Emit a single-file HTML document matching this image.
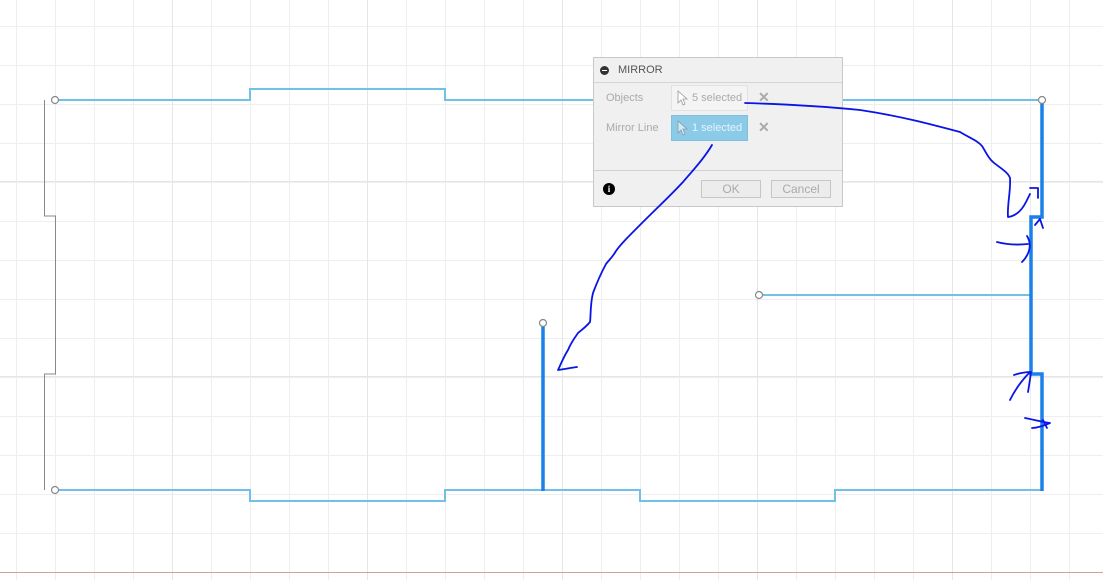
<!DOCTYPE html>
<html><head><meta charset="utf-8"><style>
body{margin:0;width:1103px;height:580px;overflow:hidden;background:#fff;font-family:"Liberation Sans",sans-serif}
.dlg{position:absolute;left:593px;top:57px;width:250px;height:150px;background:#f0f0f0;border:1px solid #c8c8c8;box-sizing:border-box;font-size:11px;color:#aaa}
.hd{height:24px;border-bottom:1px solid #d4d4d4;color:#555;font-size:11px;line-height:24px;padding-left:24px;position:relative}
.hd:before{content:"";position:absolute;left:6px;top:8px;width:9px;height:9px;border-radius:50%;background:#333}
.hd:after{content:"";position:absolute;left:8px;top:12px;width:5px;height:1px;background:#fff}
.lbl{position:absolute;left:12px}
.fld{position:absolute;left:77px;width:77px;height:26px;box-sizing:border-box;line-height:24px;padding-left:20px;border:1px solid #e2e2e2;background:#f4f4f4;color:#aaa}
.fld.sel{background:#8ccbe8;border-color:#7fc0e0;color:#e4f3fa}
.x{position:absolute;left:164px;font-size:14px;color:#aaa;font-weight:bold}
.ft{position:absolute;left:0;right:0;top:112px;border-top:1px solid #d0d0d0}
.btn{position:absolute;top:122px;height:18px;box-sizing:border-box;border:1px solid #c6c6c6;background:#ececec;color:#aaa;text-align:center;line-height:16px;font-size:12px}
</style></head><body>
<svg width="1103" height="580" style="position:absolute;left:0;top:0">
<defs><pattern id="g" x="16" y="26" width="39" height="39" patternUnits="userSpaceOnUse"><path d="M0.5 0V39M0 0.5H39" stroke="#eeeeee" stroke-width="1"/></pattern></defs>
<rect width="1103" height="580" fill="url(#g)"/>
<g stroke="#e6e6e6"><path d="M172.5 0V580M367.5 0V580M562.5 0V580M757.5 0V580M952.5 0V580M0 181.5H1103M0 376.5H1103"/></g>
<line x1="0" y1="572.5" x2="1103" y2="572.5" stroke="#c9a590" stroke-width="1"/>
<path d="M44.5 100V216H55.5V374H44.5V490" fill="none" stroke="#888" stroke-width="1"/>
<g fill="none" stroke="#70c0ea" stroke-width="2">
<path d="M55 100H250V89H445V100H1042"/>
<path d="M55 490H250V501H445V490H640V501H835V490H1042"/>
<path d="M759 295H1031"/>
</g>
<g fill="none" stroke="#1a80ea" stroke-width="3.5">
<path d="M1042 100V217H1031V374H1042V491"/>
<path d="M543 323V491"/>
</g>
<g fill="#fff" stroke="#888" stroke-width="1.2">
<circle cx="55" cy="100" r="3.5"/><circle cx="55" cy="490" r="3.5"/><circle cx="1042" cy="100" r="3.5"/><circle cx="543" cy="323" r="3.5"/><circle cx="759" cy="295" r="3.5"/>
</g>
</svg>
<div class="dlg">
<div class="hd">MIRROR</div>
<div class="lbl" style="top:34px">Objects</div>
<div class="fld" style="top:27px">5 selected</div><div class="x" style="top:31px">✕</div>
<div class="lbl" style="top:64px">Mirror Line</div>
<div class="fld sel" style="top:57px">1 selected</div><div class="x" style="top:61px">✕</div>
<svg width="12" height="16" style="position:absolute;left:83px;top:32px"><path d="M1 1V13L4 10L6 15L8 14L6 9H10Z" fill="#fff" stroke="#999" stroke-width="0.8"/></svg>
<svg width="12" height="16" style="position:absolute;left:83px;top:62px"><path d="M1 1V13L4 10L6 15L8 14L6 9H10Z" fill="#cfe9f5" stroke="#8a9aa5" stroke-width="0.8"/></svg>
<div class="ft"></div>
<div style="position:absolute;left:9px;top:125px;width:12px;height:12px;border-radius:50%;background:#000;color:#fff;font-size:9px;font-weight:bold;text-align:center;line-height:12px;font-family:'Liberation Serif',serif">i</div>
<div class="btn" style="left:107px;width:60px">OK</div>
<div class="btn" style="left:177px;width:60px">Cancel</div>
</div>
<svg width="1103" height="580" style="position:absolute;left:0;top:0">
<g fill="none" stroke="#0a14e6" stroke-width="1.8" stroke-linecap="round" stroke-linejoin="round">
<path d="M745 103C780 104 820 106 860 110C900 116 930 124 960 132C970 138 978 141 982 146C986 152 988 158 993 162C1000 168 1008 172 1010 178C1011 190 1007 205 1008 217C1016 216 1022 210 1026 202L1030 194"/>
<path d="M1030 188H1038V198"/>
<path d="M1035 225L1040 219L1043 228"/>
<path d="M997 242C1008 245 1018 245 1028 244"/>
<path d="M1027 236C1032 244 1030 254 1022 262"/>
<path d="M1010 400C1015 390 1022 380 1030 372"/>
<path d="M1014 375C1020 373 1026 372 1031 372C1030 380 1029 386 1028 392"/>
<path d="M1025 418C1035 420 1043 422 1050 423C1043 426 1036 428 1032 428"/>
<path d="M1043 420L1047 428"/>
<path d="M712 145C705 157 695 168 683 182C670 196 660 205 640 225C628 237 620 245 616 251C612 258 608 261 606 264C600 275 596 285 593 293C590 305 591 315 590 322C585 328 580 331 578 333C573 340 570 345 568 350C563 358 561 364 558 370C565 369 570 368 577 367"/>
</g>
</svg>
</body></html>
